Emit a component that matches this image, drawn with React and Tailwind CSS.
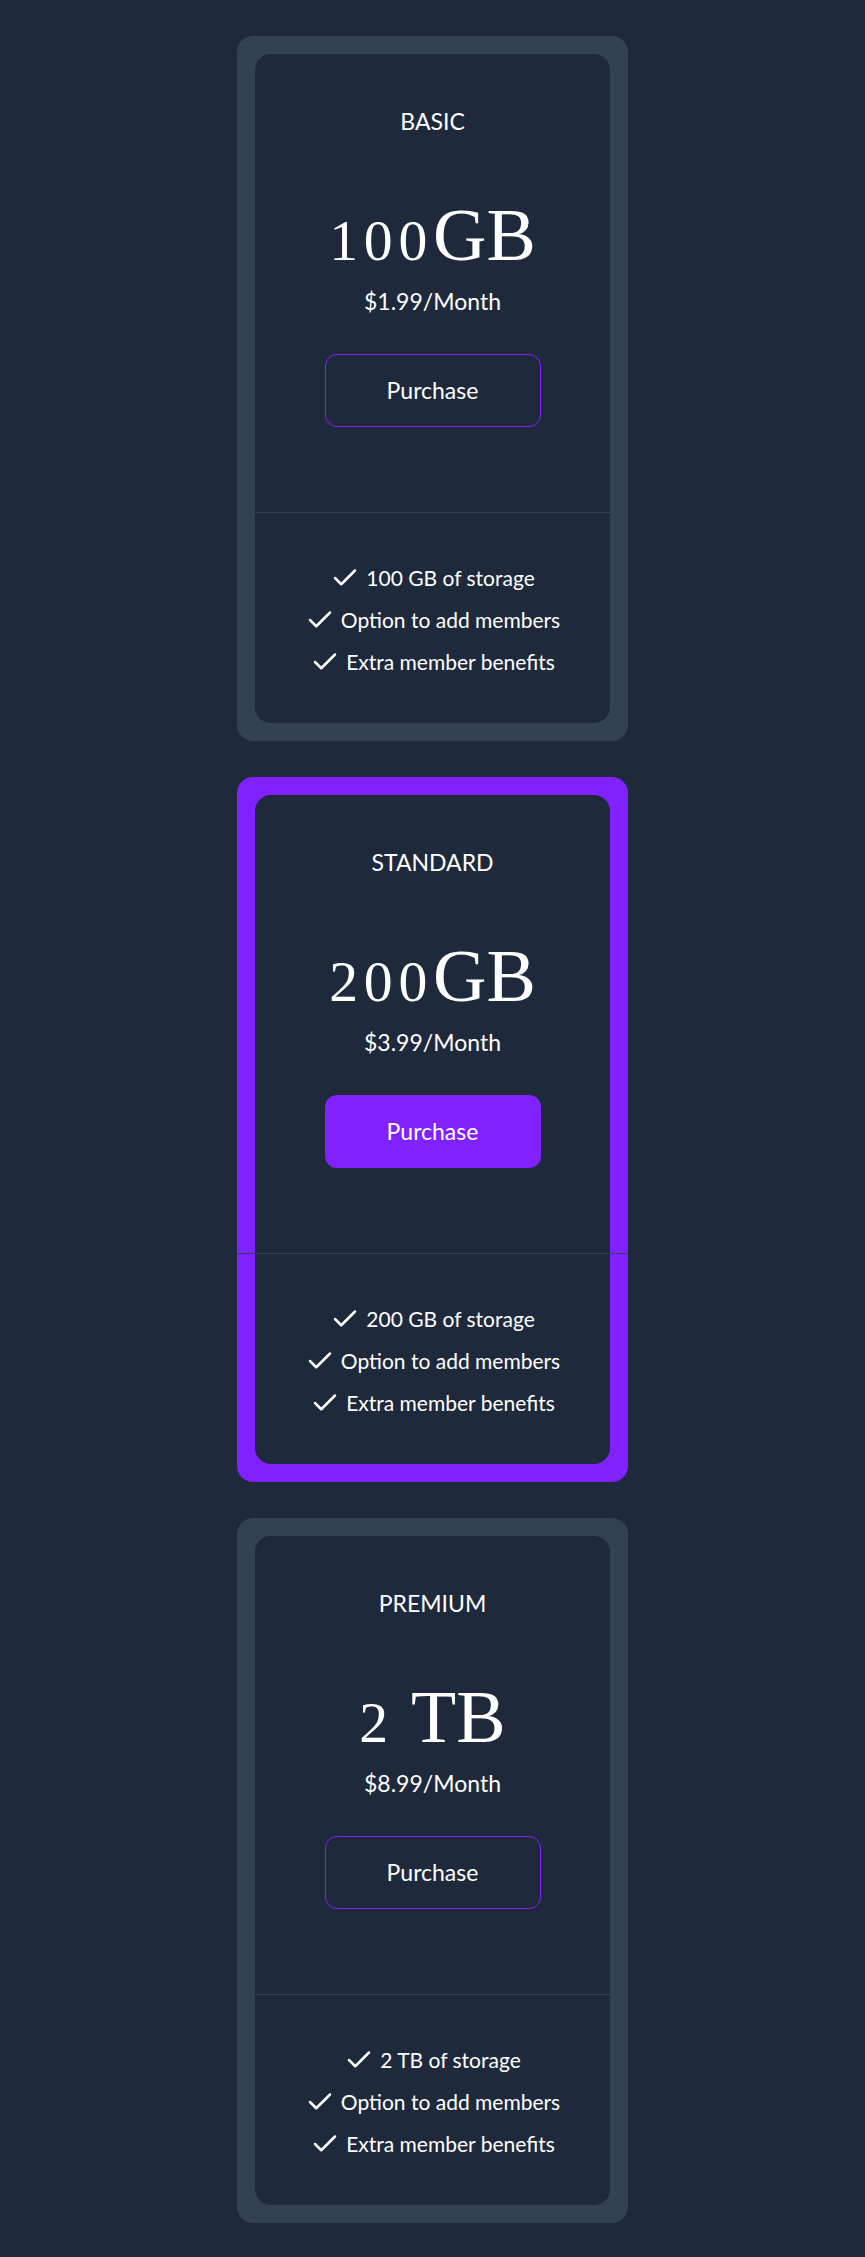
import { Check } from 'lucide-react'

const planes = [
  { nombre: 'BASIC', cifra: '100', unidad: 'GB', precio: '$1.99/Month', destacado: false },
  { nombre: 'STANDARD', cifra: '200', unidad: 'GB', precio: '$3.99/Month', destacado: true },
  { nombre: 'PREMIUM', cifra: '2', unidad: ' TB', precio: '$8.99/Month', destacado: false },
]

const extras = ['Option to add members', 'Extra member benefits']

function Tarjeta({ plan }) {
  const { nombre, cifra, unidad, precio, destacado } = plan
  const beneficios = [`${cifra} ${unidad.trim()} of storage`, ...extras]

  return (
    <div className={`w-[391px] p-[18px] rounded-2xl ${destacado ? 'bg-[#8121fd]' : 'bg-[#334155]'}`}>
      {/* Parte de arriba */}
      <div className="bg-[#1e293b] rounded-t-2xl pt-[51px] pb-[85px] flex flex-col items-center text-white">
        <h2 className="text-[23px] leading-8">{nombre}</h2>
        <p className="mt-[61px] h-[74px] text-[74px] leading-none font-['Liberation_Serif',serif]">
          <span className="text-[0.78em] tracking-[0.1em]">{cifra}</span>{unidad}
        </p>
        <p className="mt-[13px] text-[23px] leading-8">{precio}</p>
        <button
          className={`mt-[37px] w-[216px] h-[73px] rounded-xl text-[23px] text-white ${
            destacado ? 'bg-[#8121fd]' : 'border border-[#8121fd] bg-transparent'
          }`}
        >
          Purchase
        </button>
      </div>

      {/* Línea divisoria, ocupa todo el ancho */}
      <div className="-mx-[18px] h-px bg-[#334155]" />

      {/* Beneficios */}
      <ul className="bg-[#1e293b] rounded-b-2xl pt-[44px] pb-[40px] flex flex-col items-center text-white">
        {beneficios.map(b => (
          <li key={b} className="flex items-center gap-[6px] text-[21px] leading-[42px]">
            <Check size={30} strokeWidth={2} className="shrink-0" />
            {b}
          </li>
        ))}
      </ul>
    </div>
  )
}

export default function App() {
  return (
    <div className="min-h-screen bg-[#1e293b] py-9 flex flex-col items-center gap-9 font-['Lato',sans-serif]">
      {planes.map(p => <Tarjeta key={p.nombre} plan={p} />)}
    </div>
  )
}
